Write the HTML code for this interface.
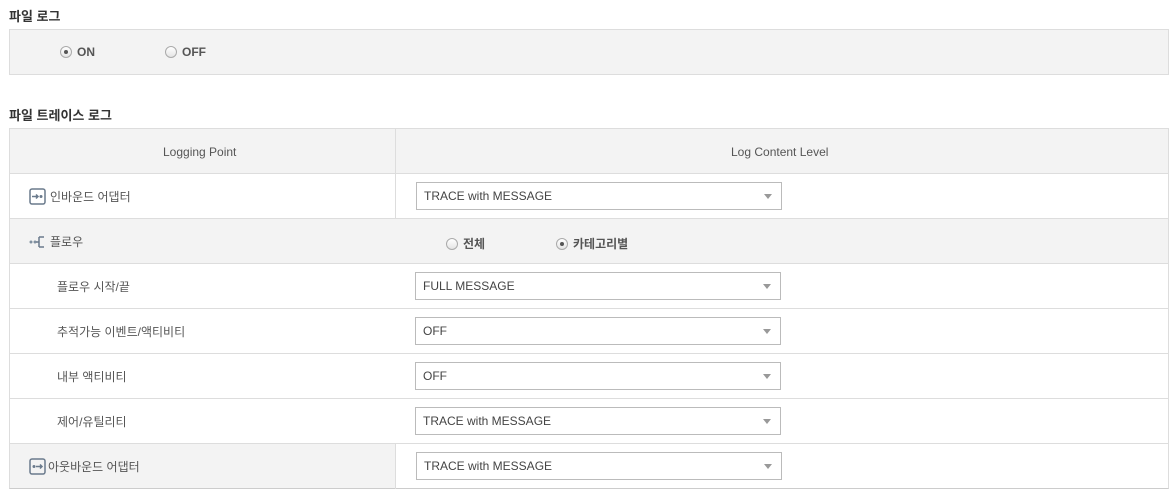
<!DOCTYPE html>
<html><head><meta charset="utf-8"><style>
*{margin:0;padding:0;box-sizing:border-box}
body{width:1174px;height:498px;background:#fff;font-family:"Liberation Sans","Noto Sans CJK KR",sans-serif;font-size:12px;color:#555;position:relative;overflow:hidden}
.abs{position:absolute}
h3{position:absolute;left:9px;font-size:13px;font-weight:bold;color:#333;z-index:5}
.box{left:9px;top:29px;width:1160px;height:46px;background:#f3f3f3;border:1px solid #ddd}
.radio{position:absolute;display:flex;align-items:center;font-weight:bold;color:#555;font-size:12px}
.radio i{width:12px;height:12px;border:1px solid #aaa;border-radius:50%;background:linear-gradient(#fff,#e4e4e4);margin-right:5px;position:relative}
.radio i.on:after{content:"";position:absolute;left:3px;top:3px;width:4px;height:4px;border-radius:50%;background:#555}
.tbl{left:9px;top:128px;width:1160px;height:361px;border:1px solid #ddd;border-bottom:1px solid #ccc}
.row{position:absolute;left:0;width:1158px;height:45px;border-bottom:1px solid #ddd}
.sel{position:absolute;width:366px;height:28px;border:1px solid #bbb;background:#fff;font-size:12px;color:#444;padding:6px 7px}
.sel:after{content:"";position:absolute;right:9px;top:11px;border-left:4px solid transparent;border-right:4px solid transparent;border-top:5px solid #999}
.lbl{position:absolute;display:flex;align-items:center;color:#555;font-size:12px}
</style></head><body>
<div class="abs box">
 <div class="radio" style="left:50px;top:22px;transform:translateY(-50%)"><i class="on"></i>ON</div>
 <div class="radio" style="left:155px;top:22px;transform:translateY(-50%)"><i></i>OFF</div>
</div>
<h3 style="top:6px">파일 로그</h3>
<h3 style="top:105px">파일 트레이스 로그</h3>
<div class="abs tbl">
 <div class="row" style="top:0;background:#f3f3f3"></div>
 <div class="abs" style="left:153px;top:16px;color:#555">Logging Point</div>
 <div class="abs" style="left:721px;top:16px;color:#555">Log Content Level</div>
 <div class="row" style="top:45px;background:#fff"></div>
 <div class="row" style="top:90px;background:#f3f3f3"></div>
 <div class="row" style="top:135px"></div>
 <div class="row" style="top:180px"></div>
 <div class="row" style="top:225px"></div>
 <div class="row" style="top:270px"></div>
 <div class="row" style="top:315px;border-bottom:none"></div>
 <div class="abs" style="left:0;top:315px;width:386px;height:44px;background:#f3f3f3"></div>
 <div class="abs" style="left:385px;top:0;width:1px;height:90px;background:#ddd"></div>
 <div class="abs" style="left:385px;top:315px;width:1px;height:45px;background:#ddd"></div>

 <div class="lbl" style="left:19px;top:59px"><svg width="17" height="17" viewBox="0 0 17 17" style="margin-right:4px"><rect x="1" y="1" width="15" height="15" rx="2" fill="none" stroke="#6a7a8c" stroke-width="1.5"/><path d="M3 8.5h6M7 6.5l2 2-2 2" stroke="#6a7a8c" stroke-width="1.5" fill="none"/><circle cx="12" cy="8.5" r="1.5" fill="#6a7a8c"/></svg>인바운드 어댑터</div>
 <div class="sel" style="left:406px;top:53px">TRACE with MESSAGE</div>

 <div class="lbl" style="left:19px;top:104px"><svg width="17" height="14" viewBox="0 0 17 14" style="margin-right:4px"><circle cx="2" cy="7" r="1.5" fill="#8090a0"/><circle cx="6" cy="7" r="1.5" fill="#8090a0"/><path d="M7 7h3M10 2v10M10 2h5M10 12h5" stroke="#6a7a8c" stroke-width="1.5" fill="none"/></svg>플로우</div>
 <div class="radio" style="left:436px;top:106px"><i></i>전체</div>
 <div class="radio" style="left:546px;top:106px"><i class="on"></i>카테고리별</div>

 <div class="lbl" style="left:47px;top:149px">플로우 시작/끝</div>
 <div class="sel" style="left:405px;top:143px">FULL MESSAGE</div>
 <div class="lbl" style="left:47px;top:194px">추적가능 이벤트/액티비티</div>
 <div class="sel" style="left:405px;top:188px">OFF</div>
 <div class="lbl" style="left:47px;top:239px">내부 액티비티</div>
 <div class="sel" style="left:405px;top:233px">OFF</div>
 <div class="lbl" style="left:47px;top:284px">제어/유틸리티</div>
 <div class="sel" style="left:405px;top:278px">TRACE with MESSAGE</div>

 <div class="lbl" style="left:19px;top:329px"><svg width="17" height="17" viewBox="0 0 17 17" style="margin-right:2px"><rect x="1" y="1" width="15" height="15" rx="2" fill="none" stroke="#6a7a8c" stroke-width="1.5"/><circle cx="5" cy="8.5" r="1.5" fill="#6a7a8c"/><path d="M7 8.5h6M11 6.5l2 2-2 2" stroke="#6a7a8c" stroke-width="1.5" fill="none"/></svg>아웃바운드 어댑터</div>
 <div class="sel" style="left:406px;top:323px">TRACE with MESSAGE</div>
</div>
</body></html>
